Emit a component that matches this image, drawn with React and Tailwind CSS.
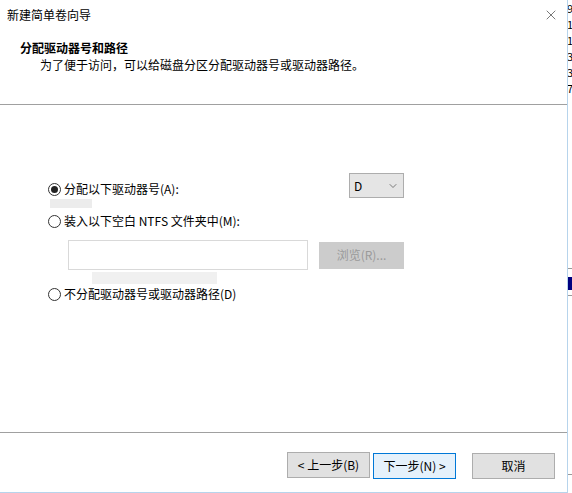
import { X, ChevronDown } from 'lucide-react';

const font = { fontFamily: '"Noto Sans CJK SC", "Noto Sans", sans-serif' };

function Radio({ checked, label }) {
  return (
    <div className="flex items-center h-[16px]">
      <span className="w-[13px] h-[13px] rounded-full border border-[#333] bg-white flex items-center justify-center shrink-0">
        {checked && <span className="w-[7px] h-[7px] rounded-full bg-[#222]" />}
      </span>
      <span className="ml-[3px] text-[12px] leading-[16px] text-black">{label}</span>
    </div>
  );
}

function Button({ children, primary }) {
  return (
    <button
      className={`h-[26px] w-[83px] text-[12px] leading-none text-black ${
        primary ? 'border border-[#0078d7] bg-[#e5f1fb]' : 'border border-[#adadad] bg-[#e1e1e1]'
      }`}
    >
      {children}
    </button>
  );
}

export default function App() {
  return (
    <div className="flex w-[572px] h-[493px] bg-white overflow-hidden" style={font}>
      {/* dialog */}
      <div className="w-[568px] h-[493px] flex flex-col border-r border-b border-[#b7d4ec] bg-white shrink-0">
        {/* title bar */}
        <div className="h-[30px] flex items-center justify-between pl-[7px] pr-[8px]">
          <span className="text-[12px] text-black">新建简单卷向导</span>
          <X size={16} strokeWidth={1} className="text-[#333]" />
        </div>

        {/* header */}
        <div className="h-[75px] pl-[20px] pt-[9px] border-b border-[#a0a0a0]">
          <div className="text-[12px] leading-[17px] font-bold text-black">分配驱动器号和路径</div>
          <div className="text-[12px] leading-[17px] text-black pl-[20px]">
            为了便于访问，可以给磁盘分区分配驱动器号或驱动器路径。
          </div>
        </div>

        {/* content */}
        <div className="flex-1 relative pl-[48px] pt-[68px]">
          <div className="flex items-start">
            <div className="w-[301px] pt-[8px]">
              <Radio checked label="分配以下驱动器号(A):" />
            </div>
            <div className="w-[55px] h-[25px] border border-[#adadad] bg-[#e5e5e5] flex items-center justify-between px-[4px]">
              <span className="text-[12px] text-black">D</span>
              <ChevronDown size={12} strokeWidth={1.5} className="text-[#555]" />
            </div>
          </div>
          <div className="ml-[2px] mt-[1px] w-[42px] h-[9px] bg-[#ececec]" />
          <div className="mt-[5px]">
            <Radio label="装入以下空白 NTFS 文件夹中(M):" />
          </div>
          <div className="flex items-center mt-[11px] ml-[20px]">
            <div className="w-[240px] h-[30px] border border-[#d9d9d9] bg-white" />
            <div className="ml-[11px] w-[85px] h-[27px] bg-[#cccccc] flex items-center justify-center text-[12px] text-[#9a9a9a]">
              浏览(R)...
            </div>
          </div>
          <div className="ml-[44px] mt-[2px] w-[125px] h-[12px] bg-[#f0f0f0]" />
          <div className="mt-[2px]">
            <Radio label="不分配驱动器号或驱动器路径(D)" />
          </div>
        </div>

        {/* footer */}
        <div className="h-[60px] border-t border-[#a0a0a0] flex items-start pt-[19px] pl-[287px]">
          <Button>&lt; 上一步(B)</Button>
          <div className="ml-[3px]">
            <Button primary>下一步(N) &gt;</Button>
          </div>
          <div className="ml-[16px]">
            <Button>取消</Button>
          </div>
        </div>
      </div>

      {/* sliver of the window behind */}
      <div className="flex-1 relative overflow-hidden bg-white">
        <div className="flex flex-col text-[11px] leading-[16px] text-black -ml-[1px]">
          <span>9</span>
          <span>1</span>
          <span>1</span>
          <span>3</span>
          <span>3</span>
          <span>7</span>
        </div>
        <div className="absolute left-0 top-[268px] w-full h-px bg-[#999]" />
        <div className="absolute left-0 top-[277px] w-full h-[13px] bg-[#000080]" />
        <div className="absolute left-0 top-[295px] w-full h-px bg-[#999]" />
        <div className="absolute left-0 top-[474px] w-full h-px bg-[#999]" />
      </div>
    </div>
  );
}
